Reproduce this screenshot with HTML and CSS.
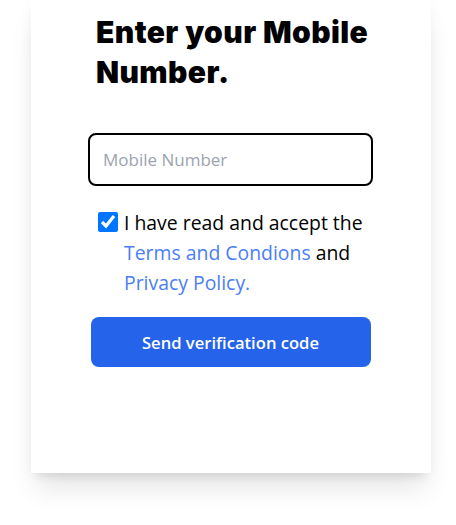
FILE: index.html
```html
<!DOCTYPE html>
<html lang="en">
<head>
<meta charset="utf-8">
<title>Enter your Mobile Number</title>
<link rel="stylesheet" href="styles.css">
</head>
<body>
<div class="page">
  <div class="card">
    <div class="form">
      <h1 class="title">Enter your Mobile Number.</h1>
      <input class="phone" type="tel" placeholder="Mobile Number">
      <label class="terms">
        <input class="check" type="checkbox" checked>
        <span class="terms-text">I have read and accept the <a class="link" href="#">Terms and Condions</a> and <a class="link" href="#">Privacy Policy.</a></span>
      </label>
      <button class="send" type="button">Send verification code</button>
    </div>
  </div>
</div>
</body>
</html>
```
FILE: styles.css
```css
html, body {
  margin: 0;
  padding: 0;
  background: #ffffff;
}
body {
  font-family: "Open Sans", "Noto Sans", sans-serif;
  color: #000;
}
.page {
  padding-left: 31px;
  min-height: 525px;
  box-sizing: border-box;
}
.card {
  width: 400px;
  height: 473px;
  background: #ffffff;
  box-shadow: 0 20px 25px -5px rgba(0,0,0,0.1), 0 8px 10px -6px rgba(0,0,0,0.1), 0 0 15px rgba(0,0,0,0.03);
  box-sizing: border-box;
  padding-top: 12px;
}
.form {
  width: 285px;
  margin-left: 57px;
  display: flex;
  flex-direction: column;
}
.title {
  margin: 0 0 0 8px;
  font-family: "Inter", sans-serif;
  font-weight: 900;
  font-size: 30px;
  line-height: 40px;
  letter-spacing: 0.4px;
}
.phone {
  margin-top: 41px;
  height: 53px;
  box-sizing: border-box;
  border: 2px solid #000;
  border-radius: 8px;
  padding: 0 13px;
  font-family: "Open Sans", sans-serif;
  font-size: 17px;
  outline: none;
}
.phone::placeholder {
  color: #9ca3af;
}
.terms {
  margin-top: 22px;
  padding-left: 10px;
  display: flex;
  align-items: flex-start;
  font-size: 19.4px;
  line-height: 30px;
}
.check {
  width: 20px;
  height: 20px;
  margin: 4px 6px 0 0;
  flex: none;
  accent-color: #0075ff;
}
.terms-text {
  flex: 1;
}
.link {
  color: #4a7ef5;
  text-decoration: none;
}
.send {
  margin: 19px auto 0;
  width: 280px;
  height: 50px;
  border: none;
  border-radius: 8px;
  background: #2563eb;
  color: #fff;
  font-family: "Open Sans", sans-serif;
  font-weight: 600;
  font-size: 16.6px;
}
```
